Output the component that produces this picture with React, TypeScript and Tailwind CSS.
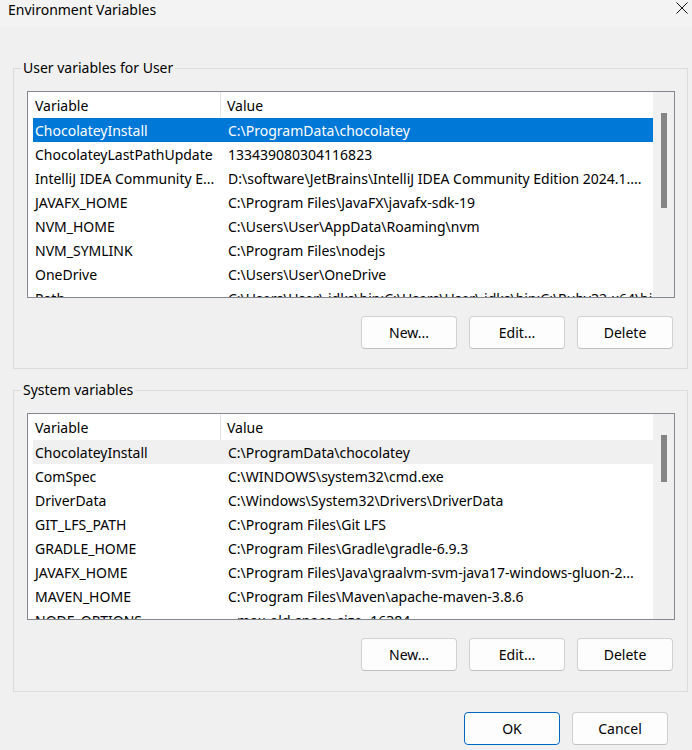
type Row = { name: string; value: string }

const userRows: Row[] = [
  { name: 'ChocolateyInstall', value: 'C:\\ProgramData\\chocolatey' },
  { name: 'ChocolateyLastPathUpdate', value: '133439080304116823' },
  { name: 'IntelliJ IDEA Community E...', value: 'D:\\software\\JetBrains\\IntelliJ IDEA Community Edition 2024.1....' },
  { name: 'JAVAFX_HOME', value: 'C:\\Program Files\\JavaFX\\javafx-sdk-19' },
  { name: 'NVM_HOME', value: 'C:\\Users\\User\\AppData\\Roaming\\nvm' },
  { name: 'NVM_SYMLINK', value: 'C:\\Program Files\\nodejs' },
  { name: 'OneDrive', value: 'C:\\Users\\User\\OneDrive' },
  { name: 'Path', value: 'C:\\Users\\User\\.jdks\\bin;C:\\Users\\User\\.jdks\\bin;C:\\Ruby32-x64\\bin' },
]

const systemRows: Row[] = [
  { name: 'ChocolateyInstall', value: 'C:\\ProgramData\\chocolatey' },
  { name: 'ComSpec', value: 'C:\\WINDOWS\\system32\\cmd.exe' },
  { name: 'DriverData', value: 'C:\\Windows\\System32\\Drivers\\DriverData' },
  { name: 'GIT_LFS_PATH', value: 'C:\\Program Files\\Git LFS' },
  { name: 'GRADLE_HOME', value: 'C:\\Program Files\\Gradle\\gradle-6.9.3' },
  { name: 'JAVAFX_HOME', value: 'C:\\Program Files\\Java\\graalvm-svm-java17-windows-gluon-2...' },
  { name: 'MAVEN_HOME', value: 'C:\\Program Files\\Maven\\apache-maven-3.8.6' },
  { name: 'NODE_OPTIONS', value: '--max-old-space-size=16384' },
]

function Button({ label, primary = false }: { label: string; primary?: boolean }) {
  return (
    <button
      className={`w-[96px] h-[33px] rounded-[4px] border bg-[#fdfdfd] text-[14px] text-black flex items-center justify-center ${
        primary ? 'border-[#0067c0]' : 'border-[#d0d0d0] border-b-[#c0c0c0]'
      }`}
    >
      {label}
    </button>
  )
}

function VarList({ rows, selected, thumbHeight }: { rows: Row[]; selected: 'active' | 'hover'; thumbHeight: string }) {
  return (
    <div className="ml-[13px] w-[648px] h-[207px] border border-[#828790] bg-white flex overflow-hidden">
      <div className="flex-1 overflow-hidden">
        {/* header */}
        <div className="h-[26px] flex items-center">
          <div className="w-[193px] h-full pl-[7px] flex items-center border-r border-[#e5e5e5]">Variable</div>
          <div className="pl-[6px]">Value</div>
        </div>
        {rows.map((r, i) => {
          const isSel = i === 0
          const cls = isSel
            ? selected === 'active'
              ? 'bg-[#0078d7] text-white'
              : 'bg-[#f0f0f0]'
            : ''
          return (
            <div key={r.name} className={`ml-[5px] h-[24px] flex items-center whitespace-nowrap ${cls}`}>
              <span className="w-[195px] pl-[2px] overflow-hidden">{r.name}</span>
              <span className="flex-1 overflow-hidden">{r.value}</span>
            </div>
          )
        })}
      </div>
      {/* scrollbar */}
      <div className="w-[21px] h-full bg-[#f0f0f0] flex justify-center">
        <div className={`mt-[21px] w-[6px] ${thumbHeight} bg-[#858585]`} />
      </div>
    </div>
  )
}

function Group({ title, children }: { title: string; children: React.ReactNode }) {
  return (
    <fieldset className="ml-[13px] w-[675px] border border-[#dcdcdc] p-0 m-0">
      <legend className="ml-[7px] px-[2px] leading-[20px]">{title}</legend>
      {children}
    </fieldset>
  )
}

export default function App() {
  return (
    <div
      className="w-[692px] h-[750px] bg-[#f0f0f0] text-[14px] text-black overflow-hidden"
      style={{ fontFamily: '"Noto Sans", "Open Sans", sans-serif' }}
    >
      <div className="h-[27px] bg-[#f3f3f3] flex justify-between pl-[8px] pr-[4px]">
        <span className="text-[14px] leading-[20px] pt-[0px]">Environment Variables</span>
        <svg width="12" height="12" viewBox="0 0 12 12" className="mt-[2px]">
          <path d="M0.5 0.5 L11.5 11.5 M11.5 0.5 L0.5 11.5" stroke="#111" strokeWidth="1" fill="none" />
        </svg>
      </div>

      <div className="mt-[31px]">
        <Group title="User variables for User">
          <div className="mt-[13px]">
            <VarList rows={userRows} selected="active" thumbHeight="h-[95px]" />
          </div>
          <div className="mt-[18px] mb-[19px] mr-[14px] flex justify-end gap-[12px]">
            <Button label="New..." />
            <Button label="Edit..." />
            <Button label="Delete" />
          </div>
        </Group>

        <div className="mt-[11px]">
          <Group title="System variables">
            <div className="mt-[13px]">
              <VarList rows={systemRows} selected="hover" thumbHeight="h-[47px]" />
            </div>
            <div className="mt-[18px] mb-[20px] mr-[14px] flex justify-end gap-[12px]">
              <Button label="New..." />
              <Button label="Edit..." />
              <Button label="Delete" />
            </div>
          </Group>
        </div>

        <div className="mt-[20px] mr-[24px] flex justify-end gap-[12px]">
          <Button label="OK" primary />
          <Button label="Cancel" />
        </div>
      </div>
    </div>
  )
}
